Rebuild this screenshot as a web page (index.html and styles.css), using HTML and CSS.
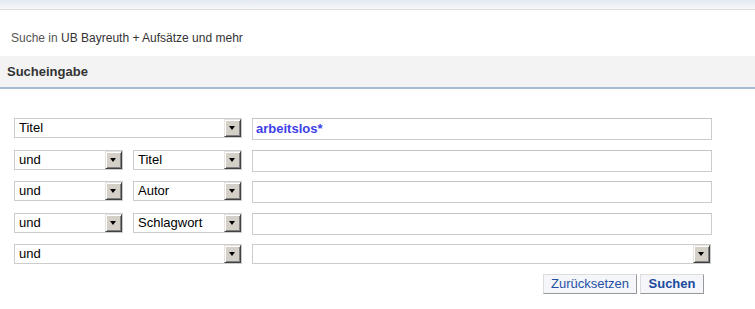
FILE: index.html
```html
<!DOCTYPE html>
<html lang="de">
<head>
<meta charset="utf-8">
<title>Sucheingabe</title>
<link rel="stylesheet" href="styles.css">
</head>
<body>
<div class="topbar"></div>
<div class="scope"><span class="scope-label">Suche in</span> UB Bayreuth + Aufsätze und mehr</div>
<h2 class="section">Sucheingabe</h2>
<form class="search">
  <div class="row">
    <div class="sel sel-wide"><span class="val">Titel</span><span class="arrow"></span></div>
    <div class="field"><span class="query">arbeitslos*</span></div>
  </div>
  <div class="row">
    <div class="sel sel-op"><span class="val">und</span><span class="arrow"></span></div>
    <div class="sel sel-idx"><span class="val">Titel</span><span class="arrow"></span></div>
    <div class="field"></div>
  </div>
  <div class="row">
    <div class="sel sel-op"><span class="val">und</span><span class="arrow"></span></div>
    <div class="sel sel-idx"><span class="val">Autor</span><span class="arrow"></span></div>
    <div class="field"></div>
  </div>
  <div class="row">
    <div class="sel sel-op"><span class="val">und</span><span class="arrow"></span></div>
    <div class="sel sel-idx"><span class="val">Schlagwort</span><span class="arrow"></span></div>
    <div class="field"></div>
  </div>
  <div class="row">
    <div class="sel sel-wide"><span class="val">und</span><span class="arrow"></span></div>
    <div class="sel sel-field"><span class="val"></span><span class="arrow"></span></div>
  </div>
  <div class="buttons">
    <button type="button" class="btn btn-reset">Zurücksetzen</button>
    <button type="button" class="btn btn-go">Suchen</button>
  </div>
</form>
</body>
</html>
```
FILE: styles.css
```css
* { box-sizing: border-box; }
html, body { margin: 0; padding: 0; background: #fff; }
body {
  width: 755px;
  font-family: "Liberation Sans", Arial, sans-serif;
  font-size: 13px;
  color: #000;
}
.topbar {
  height: 10px;
  background: linear-gradient(#e4e9f0, #f6f7f9);
  border-bottom: 1px solid #dddddd;
}
.scope {
  height: 46px;
  padding: 21px 0 0 11px;
  font-size: 12px;
  line-height: 14px;
  color: #333;
}
.scope-label { color: #555; }
.section {
  margin: 0;
  height: 33px;
  padding: 8px 0 0 7px;
  background: #f3f3f3;
  border-bottom: 2px solid #a8bbd3;
  font-size: 13px;
  line-height: 16px;
  font-weight: bold;
  color: #333;
}
.search {
  padding: 29px 0 0 14px;
}
.row {
  display: flex;
  align-items: flex-start;
  height: 31.5px;
}
.sel {
  display: flex;
  height: 20px;
  border: 1px solid #cccccc;
  background: #fff;
  margin-right: 10px;
}
.sel-wide { width: 228px; }
.sel-op { width: 109px; margin-right: 10px; }
.sel-idx { width: 109px; }
.sel-field { width: 459px; }
.val {
  flex: 1;
  padding-left: 4px;
  line-height: 18px;
  font-size: 13px;
  white-space: nowrap;
}
.arrow {
  position: relative;
  width: 17px;
  height: 18px;
  background: #d4d0c8;
  border: 1px solid;
  border-color: #e6e3de #404040 #404040 #e6e3de;
  box-shadow: inset 1px 1px #ffffff, inset -1px -1px #808080;
}
.arrow::after {
  content: "";
  position: absolute;
  left: 4px;
  top: 6px;
  border-left: 3.5px solid transparent;
  border-right: 3.5px solid transparent;
  border-top: 4px solid #000;
}
.field {
  width: 460px;
  height: 22px;
  border: 1px solid #cccccc;
  border-top-color: #c4c4c4;
  background: #fff;
  padding-left: 3px;
  line-height: 20px;
}
.query {
  font-weight: bold;
  color: #4040e8;
  font-size: 13px;
}
.buttons {
  display: flex;
  justify-content: flex-end;
  gap: 3px;
  width: 690px;
  margin-top: -1.5px;
}
.btn {
  height: 20px;
  padding: 0;
  font-family: "Liberation Sans", Arial, sans-serif;
  font-size: 13px;
  line-height: 18px;
  color: #1f4fa5;
  background: #f4f6f9;
  border: 1px solid;
  border-color: #dddddd #999999 #999999 #dddddd;
}
.btn-reset { width: 94px; }
.btn-go { width: 64px; font-weight: bold; color: #1a4a9e; }
```
